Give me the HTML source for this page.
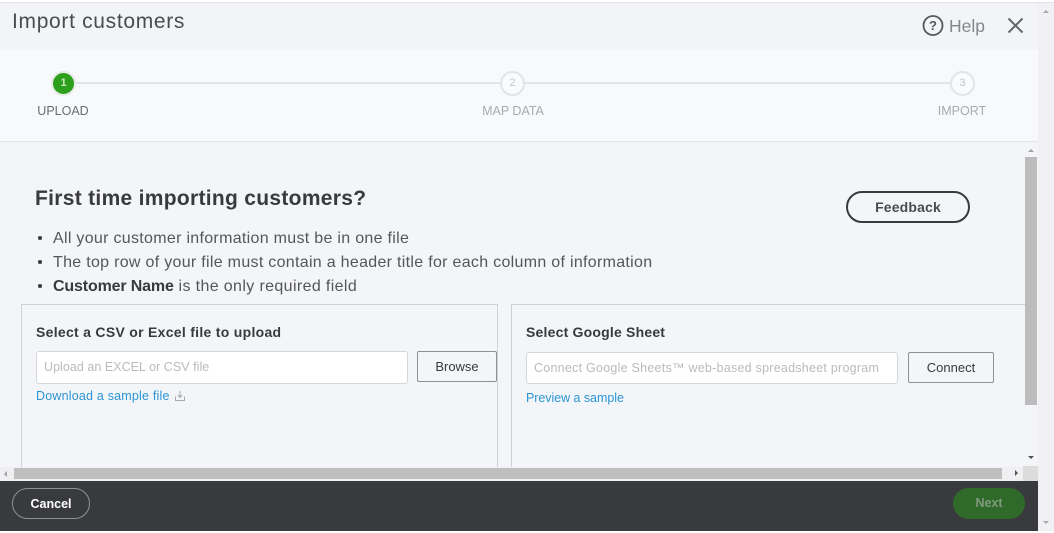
<!DOCTYPE html>
<html><head><meta charset="utf-8"><style>
html,body{margin:0;padding:0;background:#fff}
body{width:1054px;height:533px;position:relative;overflow:hidden;font-family:"Liberation Sans",sans-serif;color:#393a3d;filter:blur(.3px)}
.a{position:absolute;white-space:nowrap}
.c{position:absolute;width:21px;height:21px;border-radius:50%;background:#fafbfc;border:2px solid #e3e4e7;color:#c4c5c9;font-size:11px;line-height:21px;text-align:center}
.l{position:absolute;font-size:12.5px;line-height:16px;color:#a9abb0;width:100px;text-align:center}
.box{position:absolute;background:#fff;border:1px solid #d4d7dc;border-radius:3px;box-sizing:border-box;color:#b9bbbf;font-size:12.5px;padding-left:7px}
.btn{position:absolute;box-sizing:border-box;border:1px solid #8d9096;border-radius:2px;background:#f4f5f8;text-align:center;font-size:13px;color:#393a3d}
.link{color:#2b95d3;font-size:12.5px}
.t{left:53px;font-size:16px;line-height:20px;letter-spacing:.3px;color:#55565a}
</style></head><body>
<div class="a" style="left:0;top:0;width:1054px;height:2px;background:#fff"></div>
<div class="a" style="left:0;top:2px;width:1054px;height:1px;background:#e2e3e6"></div>
<div class="a" style="left:0;top:3px;width:1038px;height:47px;background:#f3f4f8"></div>
<div class="a" style="left:0;top:50px;width:1038px;height:91px;background:#f8f9fb"></div>
<div class="a" style="left:0;top:141px;width:1038px;height:1px;background:#e3e4e8"></div>
<div class="a" style="left:0;top:142px;width:1038px;height:339px;background:#f4f5f9"></div>
<div class="a" style="left:1038px;top:3px;width:16px;height:528px;background:#f1f1f3"></div>
<div class="a" style="left:1043px;top:10px;width:0;height:0;border-left:3px solid transparent;border-right:3px solid transparent;border-bottom:3px solid #a8a8a8"></div>
<div class="a" style="left:1043px;top:521px;width:0;height:0;border-left:3px solid transparent;border-right:3px solid transparent;border-top:3px solid #a8a8a8"></div>

<div class="a" style="left:12px;top:10px;font-size:21px;line-height:24px;letter-spacing:.68px;color:#4b4c50">Import customers</div>
<svg class="a" style="left:920px;top:13px" width="26" height="26" viewBox="0 0 26 26"><circle cx="13" cy="12.500" r="9.500" fill="none" stroke="#55565a" stroke-width="1.800"/><text x="13" y="17" font-family="Liberation Sans" font-size="13" font-weight="bold" fill="#55565a" text-anchor="middle">?</text></svg>
<div class="a" style="left:949px;top:15px;font-size:17.5px;line-height:22px;color:#85878c">Help</div>
<svg class="a" style="left:1006px;top:16px" width="20" height="20" viewBox="0 0 20 20"><path d="M2.500 2.500L16.500 16.500M16.500 2.500L2.500 16.500" stroke="#65666a" stroke-width="2" fill="none"/></svg>

<div class="a" style="left:75px;top:82px;width:426px;height:2px;background:#e3e4e7"></div>
<div class="a" style="left:524px;top:82px;width:426px;height:2px;background:#e3e4e7"></div>
<div class="a" style="left:51px;top:71px;width:21px;height:21px;border-radius:50%;background:#2ca01c;border:2px solid #e8eae8;color:#c8e8b8;font-size:11px;font-weight:bold;line-height:21px;text-align:center">1</div>
<div class="c" style="left:500px;top:71px">2</div>
<div class="c" style="left:950px;top:71px">3</div>
<div class="l" style="left:13px;top:103px;color:#6b6c72">UPLOAD</div>
<div class="l" style="left:463px;top:103px">MAP DATA</div>
<div class="l" style="left:912px;top:103px">IMPORT</div>

<div class="a" style="left:35px;top:186px;font-size:21px;line-height:26px;font-weight:bold;letter-spacing:.3px;color:#393a3d">First time importing customers?</div>
<div class="a" style="left:846px;top:191px;width:124px;height:32px;box-sizing:border-box;border:2px solid #393a3d;border-radius:16px;text-align:center;font-size:14px;line-height:28px;font-weight:bold;letter-spacing:.15px;color:#4b4c50">Feedback</div>

<div class="a" style="left:38px;top:236px;width:4px;height:4px;border-radius:50%;background:#393a3d"></div>
<div class="a" style="left:38px;top:260px;width:4px;height:4px;border-radius:50%;background:#393a3d"></div>
<div class="a" style="left:38px;top:284px;width:4px;height:4px;border-radius:50%;background:#393a3d"></div>
<div class="a t" style="top:229px">All your customer information must be in one file</div>
<div class="a t" style="top:253px">The top row of your file must contain a header title for each column of information</div>
<div class="a t" style="top:277px"><b style="color:#393a3d;letter-spacing:-.15px">Customer Name</b> <span style="letter-spacing:.37px">is the only required field</span></div>

<div class="a" style="left:21px;top:304px;width:477px;height:163px;box-sizing:border-box;border:1px solid #cfd1d5;border-bottom:0"></div>
<div class="a" style="left:511px;top:304px;width:514px;height:163px;box-sizing:border-box;border:1px solid #cfd1d5;border-bottom:0;border-right:0"></div>

<div class="a" style="left:36px;top:323px;font-size:14px;line-height:18px;font-weight:bold;letter-spacing:.29px">Select a CSV or Excel file to upload</div>
<div class="box" style="left:36px;top:351px;width:372px;height:33px;line-height:30px;letter-spacing:.04px">Upload an EXCEL or CSV file</div>
<div class="btn" style="left:417px;top:351px;width:80px;height:31px;line-height:29px">Browse</div>
<div class="a link" style="left:36px;top:388px;line-height:16px;letter-spacing:.2px">Download a sample file</div>
<svg class="a" style="left:174px;top:390px" width="12" height="12" viewBox="0 0 12 12"><path d="M6 1V7M3.800 5L6 7.500L8.200 5M1.500 6.500V10.500H10.500V6.500" fill="none" stroke="#a8aaae" stroke-width="1"/></svg>

<div class="a" style="left:526px;top:323px;font-size:14px;line-height:18px;font-weight:bold;letter-spacing:.2px">Select Google Sheet</div>
<div class="box" style="left:526px;top:352px;width:372px;height:32px;line-height:30px;letter-spacing:.25px">Connect Google Sheets™ web-based spreadsheet program</div>
<div class="btn" style="left:908px;top:352px;width:86px;height:31px;line-height:29px">Connect</div>
<div class="a link" style="left:526px;top:390px;line-height:16px;letter-spacing:-.05px">Preview a sample</div>

<div class="a" style="left:1025px;top:157px;width:12px;height:248px;background:#bcbcbc"></div>
<div class="a" style="left:1028px;top:149px;width:0;height:0;border-left:3.500px solid transparent;border-right:3.500px solid transparent;border-bottom:3px solid #a0a0a0"></div>
<div class="a" style="left:1028px;top:456px;width:0;height:0;border-left:3.500px solid transparent;border-right:3.500px solid transparent;border-top:3.500px solid #505050"></div>

<div class="a" style="left:0;top:467px;width:1024px;height:14px;background:#f0f0f2"></div>
<div class="a" style="left:14px;top:468px;width:988px;height:11px;background:#bfbfbf"></div>
<div class="a" style="left:4px;top:471px;width:0;height:0;border-top:3.500px solid transparent;border-bottom:3.500px solid transparent;border-right:3px solid #a0a0a0"></div>
<div class="a" style="left:1015px;top:470px;width:0;height:0;border-top:3.500px solid transparent;border-bottom:3.500px solid transparent;border-left:3.500px solid #505050"></div>
<div class="a" style="left:1023px;top:466px;width:15px;height:15px;background:#dcdcdc"></div>

<div class="a" style="left:0;top:481px;width:1038px;height:50px;background:#393a3d"></div>
<div class="a" style="left:12px;top:488px;width:78px;height:31px;box-sizing:border-box;border:1px solid #8d9096;border-radius:16px;color:#fff;text-align:center;font-size:12.5px;font-weight:bold;line-height:31px">Cancel</div>
<div class="a" style="left:953px;top:488px;width:72px;height:31px;border-radius:16px;background:#2f6a2a;color:#7f9a7d;text-align:center;font-size:12.5px;font-weight:bold;line-height:31px">Next</div>
</body></html>
